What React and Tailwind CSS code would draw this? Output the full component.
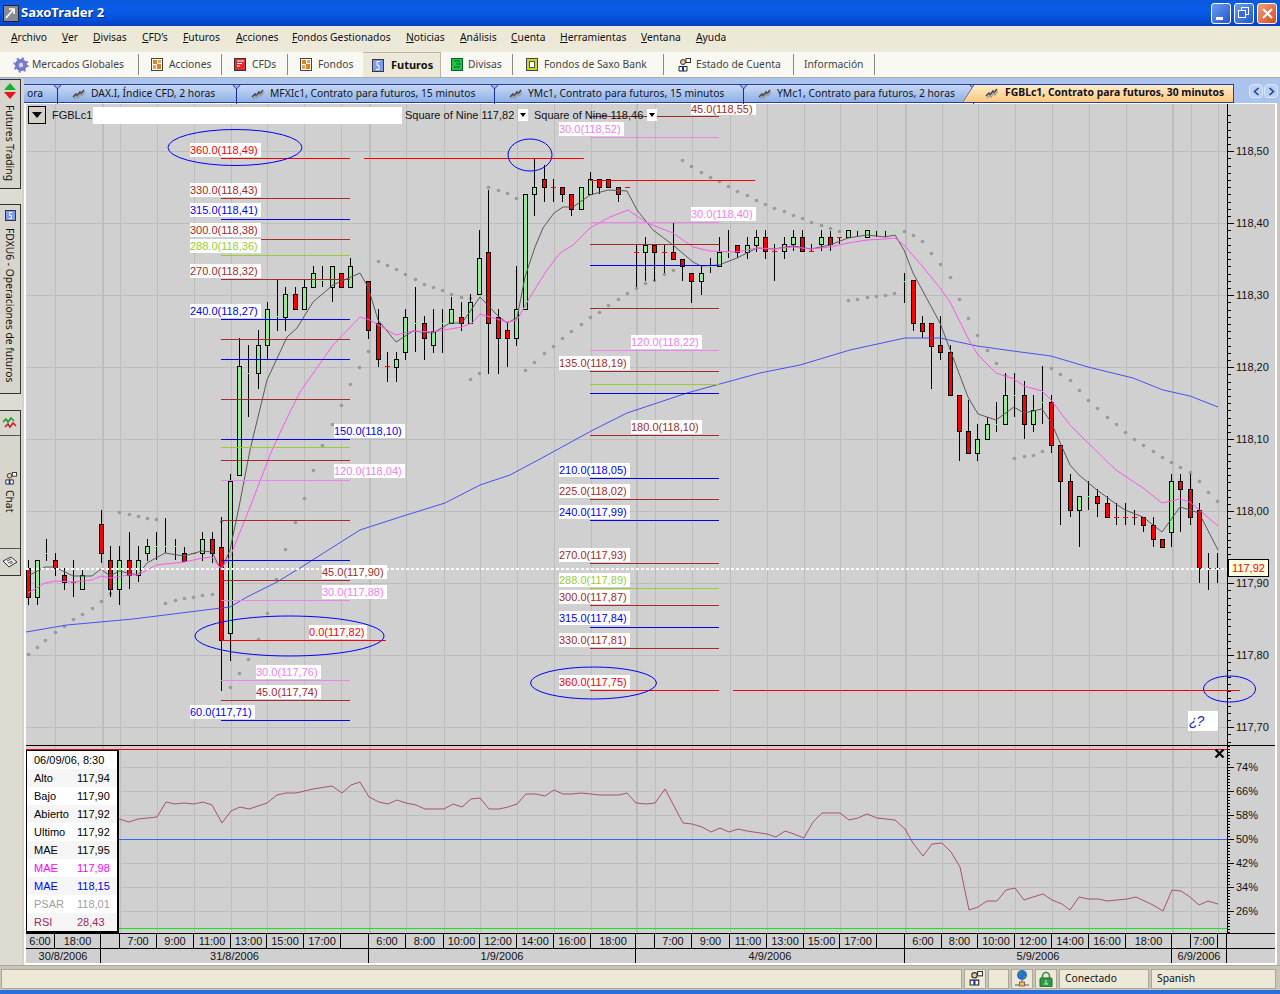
const RED = "#ff0000"
const BROWN = "#a52a2a"
const BLUE = "#0000ff"
const YG = "#9acd32"
const VIO = "#ee82ee"

// x, high, body top, body bottom, low, colour (top == bottom is a doji)
const CANDLES = [
  [28,560,568,597,605,"r"],[37,560,560,597,605,"g"],[46,539,553,553,561,"g"],[55,553,560,568,576,"r"],
  [64,568,575,582,590,"r"],[73,560,582,582,597,"r"],[82,570,575,589,590,"g"],[92,575,575,575,575,"g"],
  [101,510,524,553,563,"r"],[110,546,560,589,597,"r"],[119,546,560,589,605,"g"],[129,532,560,575,589,"r"],
  [138,546,560,575,582,"g"],[147,539,546,553,561,"g"],[156,532,546,546,560,"g"],[165,518,546,546,553,"g"],
  [175,539,546,546,560,"g"],[184,547,553,561,561,"r"],[193,553,553,553,553,"r"],[202,532,539,553,561,"g"],
  [212,532,539,553,563,"r"],[221,517,547,640,691,"r"],[230,474,481,633,661,"g"],[239,338,366,475,475,"g"],
  [248,345,373,373,417,"g"],[258,330,345,373,389,"g"],[267,302,309,345,359,"g"],[277,280,316,316,331,"g"],
  [285,287,294,317,331,"g"],[295,287,294,309,309,"r"],[304,280,287,309,309,"g"],[313,266,273,287,287,"g"],
  [322,266,280,280,287,"g"],[332,266,266,287,302,"g"],[341,273,273,287,287,"r"],[350,258,266,287,287,"g"],
  [359,258,258,258,258,"g"],[368,281,281,330,339,"r"],[378,309,323,359,367,"r"],[387,352,366,366,382,"r"],
  [396,352,359,367,382,"g"],[405,309,317,352,360,"g"],[415,287,323,323,352,"g"],[424,316,323,338,360,"r"],
  [433,309,331,345,353,"g"],[442,309,323,323,353,"g"],[451,297,309,323,323,"g"],[461,302,317,323,331,"r"],
  [470,294,302,323,323,"g"],[479,230,258,294,294,"g"],[488,190,252,323,374,"r"],[498,309,317,338,374,"r"],
  [507,323,330,338,367,"r"],[516,266,309,338,346,"g"],[525,194,194,309,309,"g"],[534,158,187,194,216,"g"],
  [544,165,179,187,202,"r"],[553,179,187,187,202,"r"],[562,187,187,194,202,"r"],[571,194,194,209,216,"r"],
  [581,187,187,209,209,"g"],[590,172,179,194,194,"g"],[599,179,179,187,194,"r"],[608,179,179,187,187,"r"],
  [618,187,187,194,202,"r"],[627,187,187,187,187,"r"],[636,245,252,252,287,"r"],[645,237,245,252,281,"g"],
  [654,245,245,252,281,"r"],[664,245,252,252,273,"r"],[673,223,252,259,259,"r"],[682,259,259,266,281,"r"],
  [691,273,273,281,303,"r"],[701,266,273,281,295,"g"],[710,258,266,266,273,"g"],[719,237,252,266,266,"g"],
  [728,230,252,252,258,"g"],[737,245,245,252,258,"r"],[747,237,245,252,259,"g"],[756,230,237,245,252,"g"],
  [765,230,237,251,259,"r"],[774,244,251,251,281,"r"],[784,237,244,251,259,"g"],[793,230,237,244,251,"g"],
  [802,230,237,251,251,"r"],[811,244,251,251,251,"r"],[821,230,237,244,251,"g"],[830,231,237,244,251,"r"],
  [839,237,237,237,244,"r"],[848,230,230,237,237,"g"],[857,230,230,230,237,"g"],[867,230,230,237,237,"g"],
  [876,230,230,230,237,"g"],[885,230,230,230,237,"g"],[894,230,230,230,230,"g"],[904,273,281,281,303,"g"],
  [913,280,280,323,331,"r"],[922,316,323,331,338,"r"],[931,323,323,346,389,"r"],[940,316,345,352,360,"r"],
  [950,345,352,395,395,"r"],[959,395,395,431,461,"r"],[968,400,431,453,453,"r"],[977,424,439,453,461,"g"],
  [987,417,424,439,439,"g"],[996,402,424,424,432,"g"],[1005,373,395,424,424,"g"],[1014,373,395,395,417,"g"],
  [1024,381,395,424,439,"r"],[1033,395,410,424,432,"g"],[1042,366,402,402,424,"g"],[1051,395,402,445,453,"r"],
  [1060,445,445,481,525,"r"],[1070,474,481,510,517,"r"],[1079,496,496,510,547,"g"],[1088,481,496,496,510,"g"],
  [1097,489,496,503,517,"r"],[1107,496,503,517,517,"r"],[1116,503,517,517,525,"r"],[1125,503,517,517,525,"r"],
  [1134,510,517,517,525,"r"],[1143,517,517,525,532,"r"],[1153,517,525,539,547,"r"],[1162,539,539,547,547,"r"],
  [1171,474,481,532,547,"g"],[1180,474,481,489,532,"r"],[1190,474,489,517,525,"r"],[1199,503,510,568,583,"r"],
  [1208,553,568,568,590,"r"],[1217,553,568,568,583,"r"],
]

const DOTS = [
  [28,654],[37,647],[45,640],[55,632],[64,626],[73,619],[82,614],[92,608],[101,601],[110,593],[119,512],[129,514],
  [138,516],[147,518],[156,519],[165,603],[175,600],[184,598],[193,597],[202,595],[212,594],[221,521],[230,687],
  [239,673],[248,659],[258,639],[267,613],[276,579],[285,549],[295,522],[304,498],[313,470],[322,445],[332,424],
  [341,405],[350,384],[359,367],[368,351],[378,261],[387,265],[396,269],[405,274],[415,279],[424,284],[433,287],
  [442,290],[451,294],[461,297],[470,298],[470,379],[479,373],[488,187],[498,190],[507,193],[516,198],[525,370],
  [534,362],[544,353],[553,346],[562,338],[571,331],[581,324],[590,317],[599,312],[608,305],[618,299],[627,293],
  [636,288],[645,283],[654,280],[664,274],[673,270],[682,160],[691,166],[701,172],[710,177],[719,181],[728,186],
  [737,191],[747,195],[756,200],[765,204],[774,208],[784,211],[793,215],[802,218],[811,222],[821,225],[830,228],
  [839,231],[848,300],[857,299],[867,297],[876,296],[885,295],[894,293],[904,231],[913,235],[922,241],[931,253],
  [940,264],[950,277],[959,299],[968,318],[977,335],[987,350],[996,363],[1005,375],[1014,458],[1024,456],[1033,455],
  [1042,451],[1051,368],[1060,374],[1070,380],[1079,390],[1088,400],[1097,408],[1107,417],[1116,424],[1125,432],
  [1134,439],[1143,445],[1153,451],[1162,457],[1171,462],[1180,467],[1190,472],[1199,481],[1208,492],[1217,501],
]

const MA_BLACK = "28,576 45,567 55,567 73,576 92,576 101,569 110,576 119,571 138,575 147,563 165,553 184,556 202,551 212,552 221,570 230,550 239,507 250,450 267,380 287,337 297,328 313,302 333,285 360,273 368,287 378,320 396,342 413,331 433,333 450,323 462,323 480,297 497,315 507,323 517,318 525,277 535,247 543,228 554,213 563,207 573,207 590,195 608,190 627,191 637,210 653,230 673,245 693,262 701,266 719,265 737,258 757,248 774,249 793,246 811,249 830,245 848,238 867,235 885,237 895,235 904,250 913,273 933,310 940,323 968,397 978,414 996,420 1014,407 1024,413 1042,409 1051,422 1070,465 1079,475 1097,490 1116,504 1125,510 1143,517 1162,532 1180,507 1190,510 1199,513 1218,550"
const MA_PINK = "28,593 45,583 55,581 73,582 92,580 101,576 110,578 129,575 138,575 156,565 184,562 203,558 212,557 221,569 230,557 250,507 272,450 287,418 300,392 333,345 360,317 370,320 387,330 396,335 413,331 433,332 450,329 462,327 472,323 480,314 507,322 517,320 530,297 547,270 560,253 573,245 590,228 610,217 628,210 647,223 673,233 693,247 710,251 737,252 757,248 774,249 793,247 811,249 830,247 848,243 867,240 885,239 895,238 904,245 923,267 940,288 950,302 970,342 978,355 996,373 1014,379 1024,386 1042,391 1051,400 1070,425 1088,443 1116,470 1143,488 1162,503 1180,499 1190,502 1218,526"
const MA_BLUE = "26,632 67,625 133,619 213,609 230,607 247,597 277,582 300,568 333,547 360,530 400,517 445,503 480,485 510,475 540,459 593,430 613,420 627,413 687,393 760,373 800,365 850,350 905,338 940,338 977,346 1013,351 1051,356 1088,367 1133,378 1163,390 1190,396 1218,407"
const RSI = "119,819 129,822 138,819 157,817 166,802 175,804 184,803 194,804 203,802 212,805 222,823 231,811 240,807 249,809 267,803 277,795 286,793 296,793 313,789 332,786 342,793 351,785 360,782 369,797 379,802 388,804 397,800 406,803 416,805 425,809 444,809 453,804 462,807 471,799 480,798 489,809 499,809 508,807 517,804 526,794 536,794 545,796 554,790 563,794 572,794 581,793 591,794 600,795 619,795 627,793 636,803 646,804 655,803 665,789 683,823 692,824 702,827 711,832 720,828 729,832 738,829 747,831 767,834 776,837 785,831 794,834 804,838 813,822 822,813 840,813 849,820 858,818 867,814 877,818 895,820 905,829 913,843 923,856 932,844 942,843 951,852 960,867 969,910 978,907 987,901 997,901 1006,890 1015,888 1024,900 1033,897 1043,894 1052,900 1062,904 1070,910 1079,897 1088,899 1098,899 1107,901 1127,899 1136,897 1153,905 1163,911 1172,890 1181,891 1190,897 1199,905 1208,901 1218,904"

const FIB = [
  [221,350,158,RED],[364,584,158,RED],[221,350,198,BROWN],[221,350,219,BLUE],[221,350,239,BROWN],[221,350,255,YG],
  [221,350,279,BROWN],[221,350,319,BLUE],[221,350,339,BROWN],[221,350,359,BLUE],[221,350,399,BROWN],[221,350,439,BLUE],
  [221,350,447,YG],[221,350,460,BROWN],[221,350,480,VIO],[221,350,520,BROWN],[221,350,560,BLUE],[221,350,580,BROWN],
  [221,350,600,VIO],[221,386,640,RED],[221,350,680,VIO],[221,350,700,BROWN],[221,350,720,BLUE],
  [590,719,116,BROWN],[590,719,137,VIO],[590,755,180,RED],[590,719,222,VIO],[590,719,244,BROWN],[590,719,265,BLUE],
  [590,719,308,BROWN],[590,719,350,VIO],[590,719,371,BROWN],[590,719,384,YG],[590,719,393,BLUE],[590,719,435,BROWN],
  [590,719,478,BLUE],[590,719,499,BROWN],[590,719,520,BLUE],[590,719,563,BROWN],[590,719,588,YG],[590,719,605,BROWN],
  [590,719,627,BLUE],[590,719,648,BROWN],[590,719,690,RED],[733,1240,690,RED],
]

const LABELS = [
  [190,143,"360.0(118,49)",RED],[190,183,"330.0(118,43)",BROWN],[190,203,"315.0(118,41)",BLUE],[190,223,"300.0(118,38)",BROWN],
  [190,239,"288.0(118,36)",YG],[190,264,"270.0(118,32)",BROWN],[190,304,"240.0(118,27)",BLUE],[334,424,"150.0(118,10)",BLUE],
  [334,464,"120.0(118,04)",VIO],[322,565,"45.0(117,90)",BROWN],[322,585,"30.0(117,88)",VIO],[309,625,"0.0(117,82)",RED],
  [256,665,"30.0(117,76)",VIO],[256,685,"45.0(117,74)",BROWN],[190,705,"60.0(117,71)",BLUE],
  [559,122,"30.0(118,52)",VIO],[691,207,"30.0(118,40)",VIO],[631,335,"120.0(118,22)",VIO],
  [559,356,"135.0(118,19)",BROWN],[631,420,"180.0(118,10)",BROWN],[559,463,"210.0(118,05)",BLUE],[559,484,"225.0(118,02)",BROWN],
  [559,505,"240.0(117,99)",BLUE],[559,548,"270.0(117,93)",BROWN],[559,573,"288.0(117,89)",YG],[559,590,"300.0(117,87)",BROWN],
  [559,611,"315.0(117,84)",BLUE],[559,633,"330.0(117,81)",BROWN],[559,675,"360.0(117,75)",RED],
]

const GRID_X = [55,120,157,194,231,267,304,341,406,444,480,517,554,591,655,692,730,767,804,840,877,942,978,1015,1052,1089,1126,1191,1218]
const GRID_THICK = [102,369,636,905,1172]
const PRICES = [["118,50",151],["118,40",223],["118,30",295],["118,20",367],["118,10",439],["118,00",511],["117,90",583],["117,80",655],["117,70",727]]
const PCTS = [["74%",767],["66%",791],["58%",815],["50%",839],["42%",863],["34%",887],["26%",911]]

const INFO = [
  ["06/09/06, 8:30","","text-black"],["Alto","117,94","text-black"],["Bajo","117,90","text-black"],["Abierto","117,92","text-black"],
  ["Ultimo","117,92","text-black"],["MAE","117,95","text-black"],["MAE","117,98","text-[#ff00ff]"],["MAE","118,15","text-[#0000ff]"],
  ["PSAR","118,01","text-[#a0a0a0]"],["RSI","28,43","text-[#a02860]"],
]

const TIMES = [
  [26,55,"6:00"],[55,101,"18:00"],[101,120,""],[120,157,"7:00"],[157,194,"9:00"],[194,231,"11:00"],[231,267,"13:00"],[267,304,"15:00"],
  [304,341,"17:00"],[341,369,""],[369,406,"6:00"],[406,444,"8:00"],[444,480,"10:00"],[480,517,"12:00"],[517,554,"14:00"],[554,591,"16:00"],
  [591,636,"18:00"],[636,655,""],[655,692,"7:00"],[692,730,"9:00"],[730,767,"11:00"],[767,804,"13:00"],[804,840,"15:00"],[840,877,"17:00"],
  [877,905,""],[905,942,"6:00"],[942,978,"8:00"],[978,1015,"10:00"],[1015,1052,"12:00"],[1052,1089,"14:00"],[1089,1126,"16:00"],
  [1126,1172,"18:00"],[1172,1191,""],[1191,1218,"7:00"],[1218,1227,""],
]
const DATES = [[26,101,"30/8/2006"],[101,369,"31/8/2006"],[369,636,"1/9/2006"],[636,905,"4/9/2006"],[905,1172,"5/9/2006"],[1172,1227,"6/9/2006"]]

const MENUS = [
  ["Archivo","w-[51px]"],["Ver","w-[31px]"],["Divisas","w-[49px]"],["CFD’s","w-[41px]"],["Futuros","w-[53px]"],["Acciones","w-[56px]"],
  ["Fondos Gestionados","w-[114px]"],["Noticias","w-[54px]"],["Análisis","w-[51px]"],["Cuenta","w-[49px]"],["Herramientas","w-[81px]"],
  ["Ventana","w-[55px]"],["Ayuda","w-[40px]"],
]

function Candle({ c }) {
  const [x, hi, top, bot, lo, col] = c
  const fill = col === "r" ? "#ff0000" : "#90ee90"
  return (
    <g>
      {hi !== lo && <line x1={x + 0.5} x2={x + 0.5} y1={hi} y2={lo} stroke="#000" />}
      {top === bot ? (
        <line x1={x - 2} x2={x + 3} y1={top + 0.5} y2={top + 0.5} stroke={fill} />
      ) : (
        <rect x={x - 1.5} y={top + 0.5} width={4} height={bot - top} fill={fill} stroke="#000" />
      )}
    </g>
  )
}

function GridLines({ y1, y2 }) {
  return (
    <g shapeRendering="crispEdges">
      {GRID_X.map((x) => <line key={x} x1={x + 0.5} x2={x + 0.5} y1={y1} y2={y2} stroke="#bdbdbd" />)}
      {GRID_THICK.map((x) => <line key={x} x1={x + 1} x2={x + 1} y1={y1} y2={y2} stroke="#bdbdbd" strokeWidth="2" />)}
    </g>
  )
}

function ChartIcon() {
  return (
    <svg width="14" height="12" viewBox="0 0 14 12" className="shrink-0" fill="none">
      <path d="M1 9l3-3 1 2 3-4 1 2 3-4" stroke="#444" strokeWidth="1.5" />
      <path d="M2 11l3-3 1 2 3-4 1 2 3-4" stroke="#999" strokeWidth="1.2" />
    </svg>
  )
}

function BoxIcon({ kind }) {
  if (kind === "red") {
    return (
      <svg width="12" height="13" viewBox="0 0 12 13" className="shrink-0">
        <rect x="0.5" y="0.5" width="11" height="12" fill="#d83030" stroke="#333" />
        <path d="M3 3h7M3 5.5h5M3 8h3" stroke="#fff" />
      </svg>
    )
  }
  if (kind === "blue") {
    return (
      <svg width="12" height="13" viewBox="0 0 12 13" className="shrink-0">
        <rect x="0.5" y="0.5" width="11" height="12" fill="#7f9cf0" stroke="#334" />
        <path d="M8 2.5H5v4h2v4H4" stroke="#fff" fill="none" />
      </svg>
    )
  }
  if (kind === "green") {
    return (
      <svg width="12" height="13" viewBox="0 0 12 13" className="shrink-0">
        <rect x="0.5" y="0.5" width="11" height="12" fill="#20c040" stroke="#063" />
        <path d="M3 3h6M5 6h5M3 9h6" stroke="#063" />
      </svg>
    )
  }
  if (kind === "yellow") {
    return (
      <svg width="12" height="13" viewBox="0 0 12 13" className="shrink-0">
        <rect x="0.5" y="0.5" width="11" height="12" fill="#c8d820" stroke="#444" />
        <rect x="3.5" y="3.5" width="5" height="6" fill="#fff" stroke="#555" />
      </svg>
    )
  }
  return (
    <svg width="12" height="13" viewBox="0 0 12 13" className="shrink-0">
      <rect x="0.5" y="0.5" width="11" height="12" fill="#fff" stroke="#444" />
      <rect x="2" y="2" width="4" height="4" fill="#e8801c" />
      <rect x="6" y="6" width="4" height="5" fill="#e8801c" />
      <rect x="7" y="2" width="3" height="3" fill="#f0a050" />
      <rect x="2" y="7" width="3" height="4" fill="#f0a050" />
    </svg>
  )
}

function PersonIcon({ size = 14 }) {
  return (
    <svg width={size} height={size} viewBox="0 0 14 14" className="shrink-0">
      <rect x="9" y="0.5" width="4.5" height="4" fill="#fff" stroke="#333" />
      <circle cx="6" cy="4" r="2.5" fill="#f0c898" stroke="#333" />
      <path d="M2 13V8.5h8V13z" fill="#fff" stroke="#222" />
      <path d="M6 8.5V13" stroke="#1030c0" strokeWidth="2" />
    </svg>
  )
}

function ToolItem({ width, icon, label, sep = true }) {
  return (
    <div className={`flex h-[21px] items-center ${width} ${sep ? "border-r border-[#8a8a84]" : ""}`}>
      {icon}
      <span className="whitespace-nowrap text-[#444]">{label}</span>
    </div>
  )
}

function Tab({ width, label, hasIcon = true, pad = "pl-[14px]" }) {
  return (
    <div className={`relative flex h-[19px] shrink-0 items-center gap-[5px] border-r border-[#1c2c8c] pb-[2px] ${width} ${pad}`}>
      {hasIcon && <ChartIcon />}
      <span className="whitespace-nowrap text-[#14141e]">{label}</span>
      <svg width="9" height="6" viewBox="0 0 9 6" className="absolute -right-[5px] -top-[1px]">
        <path d="M0.5 0.5h8L4.5 5z" fill="#9db8ea" stroke="#2a3c9c" />
      </svg>
    </div>
  )
}

function MainPanel() {
  return (
    <div className="relative h-[641px] overflow-hidden bg-[#d0d0d0] font-['Liberation_Sans',sans-serif] text-[11px]">
      <svg width="1249" height="641" viewBox="26 104 1249 641" className="absolute inset-0">
        <GridLines y1={104} y2={745} />
        <g shapeRendering="crispEdges">
          {PRICES.map(([, y]) => <line key={y} x1="26" x2="1227" y1={y + 0.5} y2={y + 0.5} stroke="#bdbdbd" />)}
        </g>
        <g fill="#9a9a9a">
          {DOTS.map(([x, y], i) => <circle key={i} cx={x + 0.5} cy={y + 0.5} r="1.8" />)}
        </g>
        <g shapeRendering="crispEdges">
          {CANDLES.map((c) => <Candle key={c[0]} c={c} />)}
        </g>
        <polyline points={MA_BLUE} fill="none" stroke="#4a4ff0" />
        <polyline points={MA_BLACK} fill="none" stroke="#5a5a5a" />
        <polyline points={MA_PINK} fill="none" stroke="#ff55ee" />
        <g shapeRendering="crispEdges">
          {FIB.map(([a, b, y, col], i) => <line key={i} x1={a} x2={b} y1={y + 0.5} y2={y + 0.5} stroke={col} />)}
          <line x1="26" x2="1227" y1="569" y2="569" stroke="#fff" strokeWidth="2" strokeDasharray="3 2" />
        </g>
        <g fill="none" stroke="#0000ff">
          <ellipse cx="235" cy="147.5" rx="67" ry="18" />
          <ellipse cx="530" cy="155" rx="22" ry="16" />
          <ellipse cx="289.5" cy="636" rx="94.5" ry="20" />
          <ellipse cx="593.5" cy="683" rx="63" ry="16" />
          <ellipse cx="1229.5" cy="689" rx="26" ry="13" />
        </g>
        <g shapeRendering="crispEdges" stroke="#000">
          <line x1="1227.5" x2="1227.5" y1="104" y2="745" />
          {Array.from({ length: 90 }, (_, i) => {
            const y = Math.round(115.2 + i * 7.2)
            const major = i % 10 === 5
            return <line key={i} x1="1228" x2={major ? 1234 : 1231} y1={y + 0.5} y2={y + 0.5} />
          })}
        </g>
      </svg>

      <div className="absolute left-[2px] top-[2px] flex h-[18px] items-center">
        <div className="flex h-[18px] w-[18px] items-center justify-center border border-black bg-[#d4d0c8]">
          <div className="h-0 w-0 border-x-[5px] border-t-[6px] border-x-transparent border-t-black" />
        </div>
        <span className="ml-[6px] w-[41px] text-[#111]">FGBLc1</span>
        <div className="h-[17px] w-[309px] bg-white" />
        <span className="ml-[3px] w-[113px] whitespace-nowrap text-[#111]">Square of Nine 117,82</span>
        <div className="flex h-[12px] w-[10px] items-center justify-center bg-white">
          <div className="h-0 w-0 border-x-[3px] border-t-[4px] border-x-transparent border-t-black" />
        </div>
        <span className="ml-[6px] w-[113px] whitespace-nowrap text-[#111]">Square of Nine 118,46</span>
        <div className="flex h-[12px] w-[10px] items-center justify-center bg-white">
          <div className="h-0 w-0 border-x-[3px] border-t-[4px] border-x-transparent border-t-black" />
        </div>
      </div>

      {LABELS.map(([x, y, text, col]) => (
        <span
          key={text}
          className="absolute h-[14px] whitespace-nowrap bg-white pr-[3px] leading-[14px]"
          style={{ left: x - 26, top: y - 104, color: col }}
        >
          {text}
        </span>
      ))}
      {/* sits right under the tab strip, so only its lower part of the box shows */}
      <span className="absolute left-[665px] top-0 h-[11px] whitespace-nowrap bg-white pr-[3px] leading-[11px] text-[#a52a2a]">
        45.0(118,55)
      </span>

      {PRICES.map(([text, y]) => (
        <span key={text} className="absolute left-[1210px] leading-[14px] text-[#111]" style={{ top: y - 111 }}>{text}</span>
      ))}

      <div className="absolute left-[1202px] top-[455px] flex h-[18px] w-[41px] items-center justify-center border border-black bg-[#ffffe1] text-[#ff0000]">
        117,92
      </div>
      <div className="absolute left-[1162px] top-[607px] h-[20px] w-[30px] bg-white pl-[1px] text-[14px] italic leading-[20px] tracking-[-1px] text-[#1c28d8]">
        ¿?
      </div>
    </div>
  )
}

function RsiPanel() {
  return (
    <div className="relative h-[188px] overflow-hidden border-t border-black bg-[#d0d0d0] font-['Liberation_Sans',sans-serif] text-[11px]">
      <svg width="1249" height="188" viewBox="26 745 1249 188" className="absolute -top-px left-0">
        <GridLines y1={746} y2={933} />
        <g shapeRendering="crispEdges">
          {[767, 791, 815, 863, 887, 911].map((y) => <line key={y} x1="26" x2="1227" y1={y + 0.5} y2={y + 0.5} stroke="#bdbdbd" />)}
          <line x1="26" x2="1227" y1="839.5" y2="839.5" stroke="#3068f0" />
          <line x1="26" x2="1227" y1="928.5" y2="928.5" stroke="#10e810" />
          <line x1="26" x2="1227" y1="749.5" y2="749.5" stroke="#ff0000" />
        </g>
        <polyline points={RSI} fill="none" stroke="#a85078" />
        <g shapeRendering="crispEdges" stroke="#000">
          <line x1="1227.5" x2="1227.5" y1="745" y2="933" />
          {Array.from({ length: 63 }, (_, i) => <line key={i} x1="1228" x2="1230" y1={746.5 + i * 3} y2={746.5 + i * 3} />)}
          {PCTS.map(([, y]) => <line key={y} x1="1228" x2="1234" y1={y + 0.5} y2={y + 0.5} />)}
        </g>
        <path d="M1215.5 749.5l8 8M1223.5 749.5l-8 8" stroke="#000" strokeWidth="2.2" fill="none" />
      </svg>

      {PCTS.map(([text, y]) => (
        <span key={text} className="absolute left-[1210px] leading-[14px] text-[#111]" style={{ top: y - 753 }}>{text}</span>
      ))}

      <div className="absolute left-0 top-[4px] w-[93px] border border-r-2 border-b-2 border-black bg-white">
        {INFO.map(([name, value, color], i) => (
          <div key={i} className={`flex h-[18px] items-center pl-[7px] ${color} ${i % 2 ? "bg-[#f5f5f5]" : "bg-white"}`}>
            <span className="w-[43px] shrink-0 whitespace-nowrap">{name}</span>
            <span>{value}</span>
          </div>
        ))}
      </div>
    </div>
  )
}

function TimeAxis() {
  return (
    <div className="bg-[#d0d0d0] font-['Liberation_Sans',sans-serif] text-[11px] text-[#111]">
      <div className="flex h-[15px] border-t border-black">
        {TIMES.map(([a, b, text], i) => (
          <div key={i} className="h-[14px] border-r border-black text-center leading-[14px]" style={{ width: b - a }}>{text}</div>
        ))}
      </div>
      <div className="flex h-[15px] border-t border-black">
        {DATES.map(([a, b, text]) => (
          <div key={text} className="h-[14px] border-r border-black text-center leading-[14px]" style={{ width: b - a }}>{text}</div>
        ))}
      </div>
    </div>
  )
}

function LeftStrip() {
  return (
    <div className="flex h-[886px] w-[24px] shrink-0 flex-col border-r-2 border-[#d5d2c8] bg-[#dedbd3] text-[#111]">
      <div className="flex h-[110px] w-[21px] flex-col items-center border border-l-0 border-[#333] bg-[#d8d5cc]">
        <svg width="16" height="17" viewBox="0 0 16 17" className="mt-[3px]">
          <path d="M8 0l6 7H2z" fill="#18b030" />
          <path d="M8 16l6-7H2z" fill="#e01818" />
        </svg>
        <span className="mt-[5px] whitespace-nowrap leading-[16px] [writing-mode:vertical-rl]">Futures Trading</span>
      </div>
      <div className="mt-[15px] flex h-[190px] w-[21px] flex-col items-center border border-l-0 border-[#333] bg-[#d8d5cc]">
        <svg width="11" height="11" viewBox="0 0 11 11" className="mt-[5px]">
          <rect x="0.5" y="0.5" width="10" height="10" fill="#7f9cf0" stroke="#334" />
          <path d="M7 2.5H4.5v3h2v3H4" stroke="#fff" fill="none" />
        </svg>
        <span className="mt-[7px] whitespace-nowrap leading-[16px] [writing-mode:vertical-rl]">FDXU6 - Operaciones de futuros</span>
      </div>
      <div className="mt-[16px] flex h-[166px] w-[21px] flex-col border border-l-0 border-[#333] bg-[#d8d5cc]">
        <div className="flex h-[25px] items-center justify-center border-b border-[#555]">
          <svg width="16" height="14" viewBox="0 0 16 14" fill="none">
            <path d="M1 6l3-3 2 3 3-4 3 3" stroke="#1a9a30" strokeWidth="1.6" />
            <path d="M3 11l3-3 2 3 3-4 3 3" stroke="#d02020" strokeWidth="1.6" />
          </svg>
        </div>
        <div className="flex flex-1 flex-col items-center pt-[36px]">
          <PersonIcon size={13} />
          <span className="mt-[5px] whitespace-nowrap leading-[16px] [writing-mode:vertical-rl]">Chat</span>
        </div>
        <div className="flex h-[27px] items-center justify-center border-t border-[#555]">
          <svg width="16" height="13" viewBox="0 0 16 13">
            <path d="M1 5l8-4 6 5-8 5z" fill="#eee" stroke="#333" />
            <path d="M5 5l4-2M6 7l4-2M8 8l3-2" stroke="#555" />
          </svg>
        </div>
      </div>
    </div>
  )
}

function WinButton({ children, close }) {
  return (
    <div
      className={`flex h-[21px] w-[20px] items-center justify-center rounded-[3px] border border-white ${
        close ? "bg-[linear-gradient(135deg,#f0a080,#d84a1c)]" : "bg-[linear-gradient(135deg,#6a9cf0,#2254d0)]"
      }`}
    >
      {children}
    </div>
  )
}

export default function App() {
  return (
    <div className="flex h-[994px] w-[1280px] flex-col overflow-hidden bg-[#ece9d8] font-['Noto_Sans',sans-serif] text-[10.3px]">
      {/* title bar */}
      <div className="flex h-[26px] shrink-0 items-center bg-[linear-gradient(180deg,#0a58dc_0%,#0a5ce8_40%,#0450d8_75%,#0a3cc0_100%)] pl-[3px] pr-[3px]">
        <svg width="16" height="17" viewBox="0 0 16 17" className="shrink-0">
          <rect x="0.5" y="0.5" width="15" height="16" fill="#8a8a94" stroke="#223" />
          <path d="M3 13l7-8M6 4h5v5" stroke="#fff" strokeWidth="1.6" fill="none" />
        </svg>
        <span className="ml-[2px] flex-1 text-[13px] font-bold text-white [text-shadow:1px_1px_0_#0a2a90]">SaxoTrader 2</span>
        <div className="flex gap-[3px]">
          <WinButton><div className="mt-[10px] h-[3px] w-[7px] -translate-x-[2px] bg-white" /></WinButton>
          <WinButton>
            <svg width="12" height="12" viewBox="0 0 12 12" fill="none" stroke="#fff">
              <rect x="3.5" y="0.5" width="7" height="7" />
              <rect x="0.5" y="3.5" width="7" height="7" fill="#3a6ce0" />
            </svg>
          </WinButton>
          <WinButton close>
            <svg width="11" height="11" viewBox="0 0 11 11" stroke="#fff" strokeWidth="2">
              <path d="M1 1l9 9M10 1l-9 9" />
            </svg>
          </WinButton>
        </div>
      </div>

      {/* menu */}
      <div className="flex h-[26px] shrink-0 items-center bg-[#ece9d8] pb-[2px] pl-[11px] text-[#111]">
        {MENUS.map(([name, w]) => (
          <div key={name} className={`${w} whitespace-nowrap`}>
            <span className="underline-offset-1 [text-decoration-thickness:1px]">
              <span className="underline">{name[0]}</span>{name.slice(1)}
            </span>
          </div>
        ))}
      </div>

      {/* toolbar */}
      <div className="flex h-[25px] shrink-0 items-center bg-[#f9f8f3]">
        <ToolItem
          width="w-[139px] pl-[13px] gap-[3px]"
          label="Mercados Globales"
          icon={
            <svg width="16" height="16" viewBox="0 0 16 16" className="shrink-0">
              <circle cx="8" cy="8" r="5.5" fill="#7a7ad8" stroke="#445" strokeWidth="0.6" />
              <circle cx="8" cy="8" r="6.5" fill="none" stroke="#8080d8" strokeWidth="2.4" strokeDasharray="2.2 2.9" />
              <circle cx="8" cy="8" r="2.2" fill="#d8d8f0" />
            </svg>
          }
        />
        <ToolItem width="w-[83px] pl-[12px] gap-[6px]" label="Acciones" icon={<BoxIcon />} />
        <ToolItem width="w-[66px] pl-[12px] gap-[6px]" label="CFDs" icon={<BoxIcon kind="red" />} />
        <ToolItem width="w-[75px] pl-[12px] gap-[6px]" label="Fondos" icon={<BoxIcon />} sep={false} />
        <div className="flex h-[25px] w-[78px] items-center gap-[7px] self-end border-r border-t border-[#b8b5a4] bg-[#ece9d8] pl-[9px] text-[11px] font-bold text-[#111]">
          <BoxIcon kind="blue" />
          Futuros
        </div>
        <ToolItem width="w-[72px] pl-[10px] gap-[5px]" label="Divisas" icon={<BoxIcon kind="green" />} />
        <ToolItem width="w-[151px] pl-[13px] gap-[6px]" label="Fondos de Saxo Bank" icon={<BoxIcon kind="yellow" />} />
        <ToolItem width="w-[130px] pl-[13px] gap-[5px]" label="Estado de Cuenta" icon={<PersonIcon />} />
        <ToolItem width="w-[81px] pl-[10px]" label="Información" />
      </div>

      <div className="h-[2px] shrink-0 border-t border-[#b0aea4] bg-[#abc4ee]" />

      {/* body */}
      <div className="flex h-[886px] shrink-0">
        <LeftStrip />
        <div className="flex w-[1256px] shrink-0 flex-col">
          {/* document tabs */}
          <div className="flex h-[24px] shrink-0 items-end bg-[#abc4ee] text-[#111]">
            <div className="flex h-[19px] items-stretch border-y border-[#2a3c9c] bg-[linear-gradient(180deg,#c8d9f5,#8fb0e8)]">
              <Tab width="w-[34px] overflow-visible" label="ora" hasIcon={false} pad="pl-[3px]" />
              <Tab width="w-[179px]" label="DAX.I, Índice CFD, 2 horas" />
              <Tab width="w-[258px]" label="MFXIc1, Contrato para futuros, 15 minutos" />
              <Tab width="w-[249px]" label="YMc1, Contrato para futuros, 15 minutos" />
              <Tab width="w-[230px]" label="YMc1, Contrato para futuros, 2 horas" />
            </div>
            <div className="relative -ml-[12px] flex h-[19px] w-[272px] items-center gap-[6px] border-y border-r border-[#2a3c9c] bg-[linear-gradient(180deg,#ffeccc,#fbc880)] pb-[1px] pl-[23px] font-bold [clip-path:polygon(12px_0,100%_0,100%_100%,0_100%)]">
              <ChartIcon />
              <span className="whitespace-nowrap text-[10.4px] text-[#111]">FGBLc1, Contrato para futuros, 30 minutos</span>
              <svg width="13" height="19" viewBox="0 0 13 19" className="absolute -top-px left-0">
                <path d="M12.5 0L0 19" stroke="#2a3c9c" />
              </svg>
            </div>
            <div className="ml-[15px] flex h-[19px] items-start gap-[1px]">
              <div className="flex h-[14px] w-[14px] items-center justify-center rounded-sm border border-[#dfe8fa] bg-[#bcd0f4] text-[#22408c]">
                <svg width="7" height="9" viewBox="0 0 7 9" fill="none" stroke="currentColor" strokeWidth="1.6"><path d="M5.5 1L1.5 4.5 5.5 8" /></svg>
              </div>
              <div className="flex h-[14px] w-[14px] items-center justify-center rounded-sm border border-[#dfe8fa] bg-[#bcd0f4] text-[#22408c]">
                <svg width="7" height="9" viewBox="0 0 7 9" fill="none" stroke="currentColor" strokeWidth="1.6"><path d="M1.5 1L5.5 4.5 1.5 8" /></svg>
              </div>
            </div>
          </div>
          <div className="flex h-[862px] shrink-0">
            <div className="w-[1253px] shrink-0 border-x-2 border-white bg-white">
              <div className="h-[1px] bg-white" />
              <MainPanel />
              <RsiPanel />
              <TimeAxis />
              <div className="h-[2px] bg-white" />
            </div>
            <div className="flex-1 bg-[#c8c5b8]" />
          </div>
        </div>
      </div>

      {/* status bar */}
      <div className="flex h-[25px] shrink-0 items-center gap-[2px] border-t border-[#aca899] bg-[#c8c5b8] px-[1px] pt-[1px] text-[#111]">
        <div className="h-[20px] w-[961px] border border-[#aca899] bg-[#ece9d8]" />
        <div className="flex h-[20px] w-[22px] items-center justify-center border border-[#aca899] bg-[#ece9d8]"><PersonIcon size={15} /></div>
        <div className="h-[20px] w-[21px] border border-[#aca899] bg-[#ece9d8]" />
        <div className="flex h-[20px] w-[22px] items-center justify-center border border-[#aca899] bg-[#ece9d8]">
          <svg width="16" height="17" viewBox="0 0 16 17">
            <circle cx="8" cy="5" r="5" fill="#2a6ad8" />
            <path d="M5 2c2 0 3 1 3 3-2 1-3 0-3-3zM9 6c2-1 3 0 3 1-1 2-2 2-3-1z" fill="#30a040" />
            <path d="M8 10v3M1 15h14" stroke="#555" />
            <rect x="5.5" y="12" width="5" height="4" fill="#f0c040" stroke="#865" />
          </svg>
        </div>
        <div className="flex h-[20px] w-[22px] items-center justify-center border border-[#aca899] bg-[#ece9d8]">
          <svg width="14" height="16" viewBox="0 0 14 16">
            <path d="M3.5 8V5a3.5 3.5 0 017 0v3" fill="none" stroke="#3a9048" strokeWidth="1.6" />
            <rect x="1" y="7" width="12" height="9" rx="1" fill="#2f9a45" stroke="#1d6a2c" />
            <path d="M7 9v4M5 13h4" stroke="#d8f0d0" />
          </svg>
        </div>
        <div className="flex h-[20px] w-[90px] items-center border border-[#aca899] bg-[#ece9d8] pl-[5px]">Conectado</div>
        <div className="flex h-[20px] w-[125px] items-center border border-[#aca899] bg-[#ece9d8] pl-[5px]">Spanish</div>
      </div>
      <div className="h-[4px] shrink-0 bg-[#2a6fdc]" />
    </div>
  )
}
